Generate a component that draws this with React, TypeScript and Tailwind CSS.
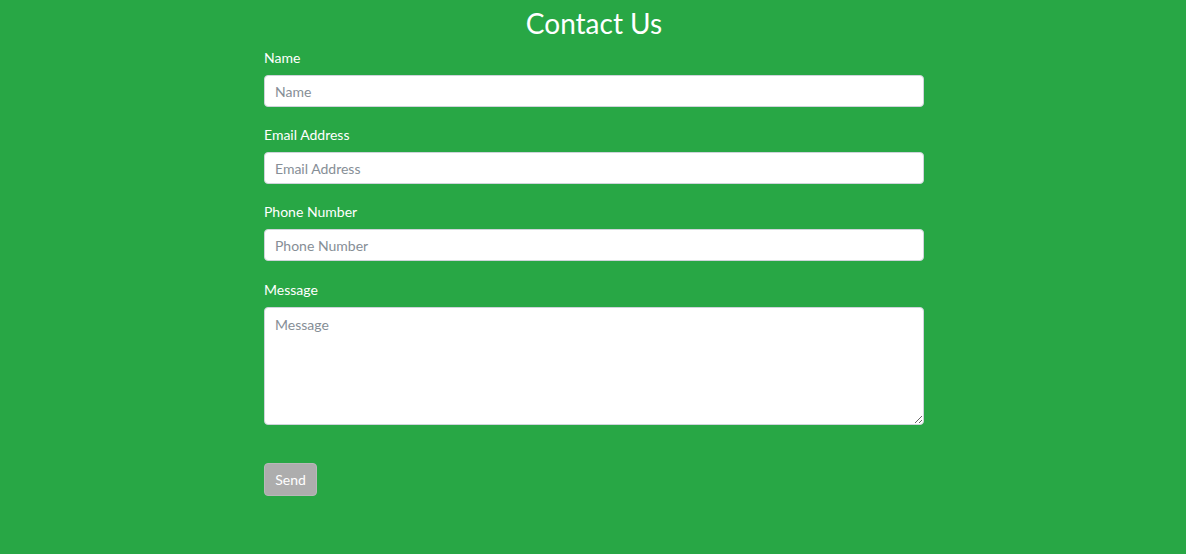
import React from "react";

const fields = [
  { label: "Name", type: "text" },
  { label: "Email Address", type: "email" },
  { label: "Phone Number", type: "tel" },
];

export default function App() {
  return (
    <div
      className="min-h-[554px] w-full bg-[#28a745] pl-[2px] text-white"
      style={{ fontFamily: '"Segoe UI", Lato, "Open Sans", sans-serif' }}
    >
      <div className="mx-auto w-[660px] pt-[6px]">
        <h1 className="mb-[7px] text-center text-[28px] leading-[34px] font-normal">
          Contact Us
        </h1>
        <form onSubmit={(e) => e.preventDefault()}>
          {fields.map((f) => (
            <div key={f.label} className="mb-[17px]">
              <label className="mb-[7px] block text-[14px] leading-[21px]">
                {f.label}
              </label>
              <input
                type={f.type}
                placeholder={f.label}
                className="block h-[32px] w-full rounded-[4px] border border-[#ced4da] bg-white px-[10px] text-[14px] text-[#495057] placeholder:text-[#868e96] outline-none"
              />
            </div>
          ))}
          <div className="mb-[38px]">
            <label className="mb-[7px] block pt-[1px] text-[14px] leading-[21px]">
              Message
            </label>
            <textarea
              placeholder="Message"
              className="block h-[118px] w-full rounded-[4px] border border-[#ced4da] bg-white px-[10px] py-[6px] text-[14px] text-[#495057] placeholder:text-[#868e96] outline-none"
            />
          </div>
          <button
            type="submit"
            className="h-[33px] w-[53px] rounded-[4px] border border-[#b8b8b8] bg-[#adadad] text-[14px] text-white"
          >
            Send
          </button>
        </form>
      </div>
    </div>
  );
}
